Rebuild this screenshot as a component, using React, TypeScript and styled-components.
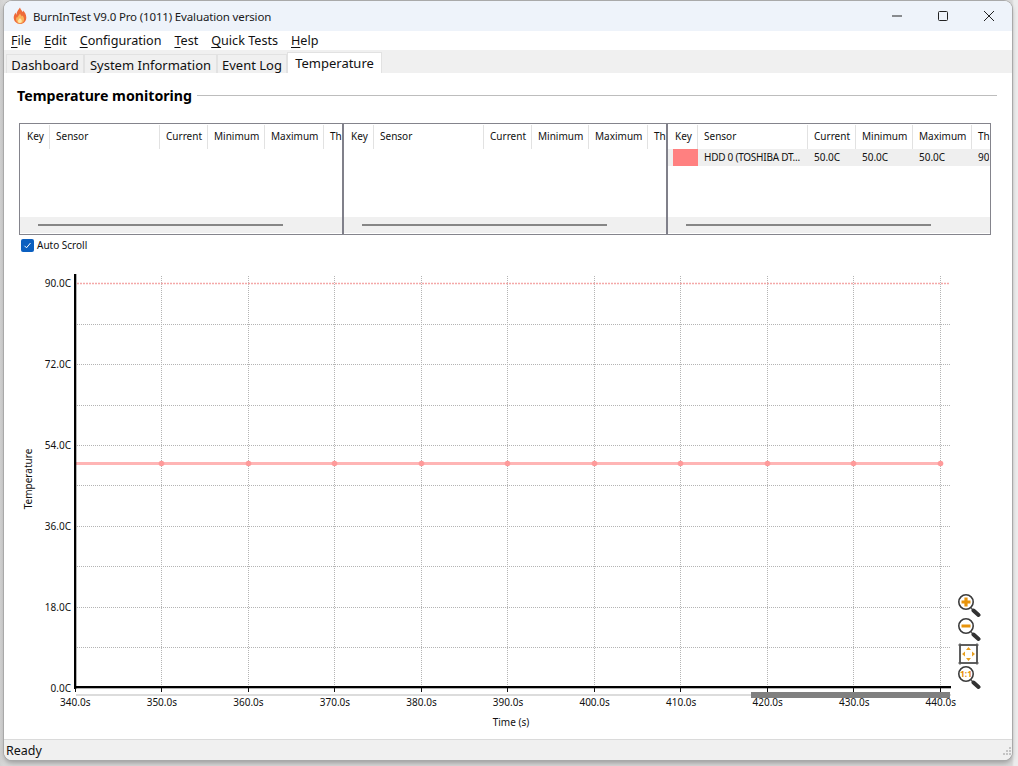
import React from "react";
import styled, { createGlobalStyle } from "styled-components";

const FONT = `"Noto Sans", "Open Sans", "Liberation Sans", sans-serif`;

const Global = createGlobalStyle`
  html, body { margin: 0; padding: 0; height: 100%; background: #e4e4e4; }
  #root { height: 100%; }
  body { font-family: ${FONT}; color: #111; overflow: hidden; }
`;

const Desktop = styled.div`
  width: 1018px;
  height: 766px;
  padding: 1px 6px 6px 4px;
  box-sizing: border-box;
  background: linear-gradient(90deg, #d2d2d2 0, #d8d8d8 4px, #d8d8d8 1012px, #ececec 1014px);
`;

const Window = styled.div`
  width: 1008px;
  height: 759px;
  display: flex;
  flex-direction: column;
  background: #fff;
  border-radius: 8px;
  overflow: hidden;
  box-shadow: 0 0 0 1px #a9a9a9, 0 3px 5px rgba(0, 0, 0, 0.28);
`;

const TitleBar = styled.div`
  height: 30px;
  flex: none;
  display: flex;
  align-items: center;
  background: #eef3fa;
  padding-left: 8px;
`;

const TitleText = styled.span`
  font-size: 11.5px;
  letter-spacing: -0.15px;
  margin-left: 5px;
  color: #1a1a1a;
  flex: 1;
  white-space: nowrap;
`;

const CaptionButton = styled.button`
  width: 46px;
  height: 30px;
  border: 0;
  padding: 0;
  background: none;
  display: flex;
  align-items: center;
  justify-content: center;
`;

const MenuBar = styled.div`
  height: 19px;
  flex: none;
  display: flex;
  align-items: center;
  background: #fff;
  padding-left: 7px;
  gap: 13px;
`;

const MenuItem = styled.span`
  font-size: 12.6px;
  line-height: 19px;
  color: #111;
  white-space: nowrap;
  u { text-underline-offset: 2px; text-decoration-thickness: 1px; }
`;

const TabBar = styled.div`
  height: 23px;
  flex: none;
  display: flex;
  align-items: flex-end;
  background: #f0f0f0;
  padding-left: 2px;
`;

const Tab = styled.div<{ $active?: boolean; $w: number }>`
  width: ${(p) => p.$w}px;
  height: ${(p) => (p.$active ? 21 : 19)}px;
  box-sizing: border-box;
  background: ${(p) => (p.$active ? "#fff" : "#f0f0f0")};
  border: 1px solid #e2e2e2;
  border-bottom: 0;
  font-size: 13px;
  line-height: ${(p) => (p.$active ? 21 : 20)}px;
  text-align: center;
  white-space: nowrap;
  color: #111;
`;

const Content = styled.div`
  flex: 1;
  min-height: 0;
  position: relative;
  display: flex;
  flex-direction: column;
  background: #fff;
`;

const GroupHeader = styled.div`
  height: 24px;
  margin: 11px 15px 15px 13px;
  flex: none;
  display: flex;
  align-items: center;
  gap: 5px;
`;

const GroupTitle = styled.h2`
  margin: -2px 0 0;
  font-size: 14.2px;
  font-weight: 700;
  color: #000;
  white-space: nowrap;
`;

const GroupRule = styled.div`
  flex: 1;
  height: 1px;
  margin-top: -1px;
  background: #bdbdbd;
`;

const TablesBox = styled.div`
  margin-left: 15px;
  width: 972px;
  height: 112px;
  box-sizing: border-box;
  border: 1px solid #84848c;
  display: grid;
  grid-template-columns: 322px 322px 322px;
  column-gap: 2px;
  background: #80808a;
  flex: none;
`;

const Panel = styled.div`
  background: #fff;
  display: flex;
  flex-direction: column;
  overflow: hidden;
`;

const HeaderRow = styled.div`
  height: 24px;
  margin-top: 1px;
  flex: none;
  display: flex;
`;

const HeaderCell = styled.div<{ $w: number }>`
  width: ${(p) => p.$w}px;
  flex: none;
  box-sizing: border-box;
  padding-left: 6px;
  border-right: 1px solid #e2e2e2;
  font-size: 10px;
  line-height: 23.5px;
  color: #111;
  white-space: nowrap;
  overflow: hidden;
  &:first-child { padding-left: 7px; }
  &:last-child { border-right: 0; }
`;

const Rows = styled.div`
  flex: 1;
`;

const DataRow = styled.div`
  height: 17px;
  display: flex;
  background: #efefef;
`;

const DataCell = styled.div<{ $w: number }>`
  width: ${(p) => p.$w}px;
  flex: none;
  box-sizing: border-box;
  padding-left: 7px;
  font-size: 10px;
  line-height: 17px;
  color: #111;
  white-space: nowrap;
  overflow: hidden;
`;

const SensorName = styled(DataCell)`
  letter-spacing: -0.25px;
`;

const KeySwatch = styled.div<{ $color: string }>`
  width: 25px;
  margin-left: 5px;
  margin-right: -1px;
  flex: none;
  background: ${(p) => p.$color};
`;

const ScrollTrack = styled.div`
  height: 16px;
  flex: none;
  background: #f0f0f0;
  margin-bottom: 1px;
  padding: 7px 0 0 18px;
  box-sizing: border-box;
`;

const ScrollThumb = styled.div`
  width: 245px;
  height: 2px;
  background: #868686;
`;

const CheckRow = styled.label`
  display: flex;
  align-items: center;
  gap: 3px;
  height: 16px;
  margin: 2px 0 0 17px;
  flex: none;
  font-size: 10px;
  color: #111;
`;

const CheckBox = styled.span`
  width: 13px;
  height: 13px;
  border-radius: 2px;
  background: #0b5fc0;
  display: flex;
  align-items: center;
  justify-content: center;
`;

const ChartArea = styled.div`
  flex: 1;
  min-height: 0;
  svg { display: block; }
`;

const ZoomTools = styled.div`
  position: absolute;
  left: 953px;
  top: 521px;
  display: flex;
  flex-direction: column;
  gap: 0;
`;

const IconSvg = styled.svg`
  display: block;
`;

const StatusBar = styled.div`
  height: 21px;
  flex: none;
  box-sizing: border-box;
  border-top: 1px solid #dadada;
  background: #f0f0f0;
  display: flex;
  align-items: center;
  justify-content: space-between;
  padding-left: 2px;
  font-size: 12.5px;
  color: #111;
`;

const Flame = () => (
  <svg width="16" height="18" viewBox="0 0 16 18">
    <path d="M8 0.500c.6 2.400 2 3 2.600 4.600.4-.5.6-1 .5-1.700 1.800 1.700 3.200 4.200 3.200 7 0 3.900-2.800 6.600-6.300 6.600S1.700 14.300 1.700 10.600c0-2.200 1-3.700 2-5 0 1 .2 1.700.8 2.200C4.300 4.800 6.300 3 8 .5z" fill="#ee6b3a" />
    <path d="M8.100 6.500c.4 1.500 1.300 2 1.800 3 .3-.3.5-.6.5-1 1 1.100 1.700 2.300 1.700 3.800 0 2.400-1.800 4.200-4 4.200s-4-1.700-4-4c0-1.300.6-2.200 1.200-2.900.1.600.3 1 .6 1.200C5.800 9 7.200 8 8.100 6.500z" fill="#fab45c" />
    <path d="M8 11c.5 1 1.800 1.500 1.800 3 0 1.200-.8 2-1.900 2s-1.900-.8-1.900-2c0-1.300 1.400-1.800 2-3z" fill="#ffe6a8" />
  </svg>
);

const MinIcon = () => (
  <svg width="12" height="12" viewBox="0 0 12 12"><path d="M1 6h10" stroke="#222" strokeWidth="1" /></svg>
);
const MaxIcon = () => (
  <svg width="12" height="12" viewBox="0 0 12 12"><rect x="1.500" y="1.500" width="9" height="9" rx="1" fill="none" stroke="#222" /></svg>
);
const CloseIcon = () => (
  <svg width="12" height="12" viewBox="0 0 12 12"><path d="M1 1l10 10M11 1L1 11" stroke="#222" strokeWidth="1" /></svg>
);

const Lens = ({ children }: { children: React.ReactNode }) => (
  <IconSvg width="24" height="24" viewBox="0 0 24 24">
    <path d="M14 14l2 2" stroke="#555" strokeWidth="1.500" />
    <path d="M16.500 16.500l5 4.500" stroke="#333" strokeWidth="4" strokeLinecap="round" />
    <circle cx="9" cy="8" r="7.200" fill="#fff" stroke="#3c3c3c" strokeWidth="1.600" />
    {children}
  </IconSvg>
);

const ZoomInIcon = () => (
  <Lens><path d="M4.500 8h9M9 3.500v9" stroke="#e8940c" strokeWidth="3.200" /></Lens>
);
const ZoomOutIcon = () => (
  <Lens><path d="M4.500 8h9" stroke="#e8940c" strokeWidth="3.200" /></Lens>
);
const ZoomOneIcon = () => (
  <Lens>
    <text x="9" y="11" textAnchor="middle" fontSize="8.500" fontWeight="700" fill="#e8940c" fontFamily={FONT}>1:1</text>
  </Lens>
);
const FitIcon = () => (
  <IconSvg width="24" height="24" viewBox="0 0 24 24">
    <rect x="3" y="3" width="17" height="18" fill="#fff" stroke="#333" strokeWidth="1.500" />
    <path d="M1 3h21M1 21h21M3 1v22M20 1v22" stroke="#555" strokeWidth="0.800" />
    <path d="M11.500 5l2.500 3h-5zM11.500 19l2.500-3h-5zM5 12l3-2.500v5zM18 12l-3-2.500v5z" fill="#e8a020" />
  </IconSvg>
);

const columns = [
  { label: "Key", w: 30 },
  { label: "Sensor", w: 110 },
  { label: "Current", w: 48 },
  { label: "Minimum", w: 57 },
  { label: "Maximum", w: 59 },
  { label: "Th", w: 18 },
];

const SensorPanel = ({ row }: { row?: boolean }) => (
  <Panel>
    <HeaderRow>
      {columns.map((c) => (
        <HeaderCell key={c.label} $w={c.w}>{c.label}</HeaderCell>
      ))}
    </HeaderRow>
    <Rows>
      {row && (
        <DataRow>
          <KeySwatch $color="#ff8080" />
          <SensorName $w={110}>HDD 0 (TOSHIBA DT...</SensorName>
          <DataCell $w={48}>50.0C</DataCell>
          <DataCell $w={57}>50.0C</DataCell>
          <DataCell $w={59}>50.0C</DataCell>
          <DataCell $w={18}>90</DataCell>
        </DataRow>
      )}
    </Rows>
    <ScrollTrack><ScrollThumb /></ScrollTrack>
  </Panel>
);

const xTicks = [340, 350, 360, 370, 380, 390, 400, 410, 420, 430, 440];
const tx = (t: number) => 75 + (t - 340) * 8.655;
const px = (t: number) => Math.floor(tx(t)) + 0.5;
const yMajor = [0, 18, 36, 54, 72, 90];
const yMinor = [9, 27, 45, 63, 81];
const py = (v: number) => Math.floor(688.2 - v * 4.4944) + 0.5;

const LABEL = { fontFamily: FONT, fontSize: 10, fill: "#111" };

const Chart = () => (
  <svg width="1008" height="486" viewBox="4 253 1008 486">
    <g stroke="#b4b4b4" strokeWidth="1" strokeDasharray="1 1">
      {xTicks.slice(1).map((t) => (
        <line key={t} x1={px(t)} x2={px(t)} y1="276" y2="687" />
      ))}
      {[...yMajor.slice(1, 5), ...yMinor].map((v) => (
        <line key={v} x1="77" x2="950" y1={py(v)} y2={py(v)} />
      ))}
    </g>
    <line x1="77" x2="950" y1="283.500" y2="283.500" stroke="#f4a8a8" strokeWidth="1.500" strokeDasharray="2 1" />
    <line x1="76" x2="943" y1="463.500" y2="463.500" stroke="#ff8080" strokeOpacity="0.58" strokeWidth="3" />
    {xTicks.slice(1).map((t) => (
      <circle key={t} cx={px(t)} cy="463.500" r="2.800" fill="#ff9a9a" />
    ))}
    <rect x="76" y="694" width="875" height="2" fill="#dcdcdc" />
    <rect x="751" y="692" width="199" height="6" fill="#808080" />
    <rect x="74" y="274" width="2.300" height="415" fill="#000" />
    <rect x="74" y="686" width="877" height="2.300" fill="#000" />
    {xTicks.map((t) => (
      <line key={t} x1={px(t)} x2={px(t)} y1="688" y2="692" stroke="#111" />
    ))}
    {xTicks.map((t) => (
      <text key={t} {...LABEL} x={tx(t) + 0.3} y="706" textAnchor="middle">{t}.0s</text>
    ))}
    {yMajor.map((v) => (
      <text key={v} {...LABEL} x="71" y={py(v) + 3.8} textAnchor="end">{v}.0C</text>
    ))}
    <text {...LABEL} x="511" y="726" textAnchor="middle">Time (s)</text>
    <text {...LABEL} transform="translate(32 479) rotate(-90)" textAnchor="middle">Temperature</text>
  </svg>
);

export default function App() {
  return (
    <Desktop>
      <Global />
      <Window>
        <TitleBar>
          <Flame />
          <TitleText>BurnInTest V9.0 Pro (1011) Evaluation version</TitleText>
          <CaptionButton aria-label="Minimize"><MinIcon /></CaptionButton>
          <CaptionButton aria-label="Maximize"><MaxIcon /></CaptionButton>
          <CaptionButton aria-label="Close"><CloseIcon /></CaptionButton>
        </TitleBar>
        <MenuBar>
          <MenuItem><u>F</u>ile</MenuItem>
          <MenuItem><u>E</u>dit</MenuItem>
          <MenuItem><u>C</u>onfiguration</MenuItem>
          <MenuItem><u>T</u>est</MenuItem>
          <MenuItem><u>Q</u>uick Tests</MenuItem>
          <MenuItem><u>H</u>elp</MenuItem>
        </MenuBar>
        <TabBar>
          <Tab $w={78}>Dashboard</Tab>
          <Tab $w={133}>System Information</Tab>
          <Tab $w={70}>Event Log</Tab>
          <Tab $w={95} $active>Temperature</Tab>
        </TabBar>
        <Content>
          <GroupHeader>
            <GroupTitle>Temperature monitoring</GroupTitle>
            <GroupRule />
          </GroupHeader>
          <TablesBox>
            <SensorPanel />
            <SensorPanel />
            <SensorPanel row />
          </TablesBox>
          <CheckRow>
            <CheckBox>
              <svg width="9" height="9" viewBox="0 0 9 9"><path d="M1.500 4.800l2 2 4-4.800" fill="none" stroke="#fff" strokeWidth="1" /></svg>
            </CheckBox>
            Auto Scroll
          </CheckRow>
          <ChartArea><Chart /></ChartArea>
          <ZoomTools>
            <ZoomInIcon />
            <ZoomOutIcon />
            <FitIcon />
            <ZoomOneIcon />
          </ZoomTools>
        </Content>
        <StatusBar>
          Ready
          <svg width="12" height="12" viewBox="0 0 12 12">
            <g fill="#c4c4c4">
              <rect x="9" y="9" width="2" height="2" /><rect x="6" y="9" width="2" height="2" /><rect x="3" y="9" width="2" height="2" />
              <rect x="9" y="6" width="2" height="2" /><rect x="6" y="6" width="2" height="2" /><rect x="9" y="3" width="2" height="2" />
            </g>
          </svg>
        </StatusBar>
      </Window>
    </Desktop>
  );
}
